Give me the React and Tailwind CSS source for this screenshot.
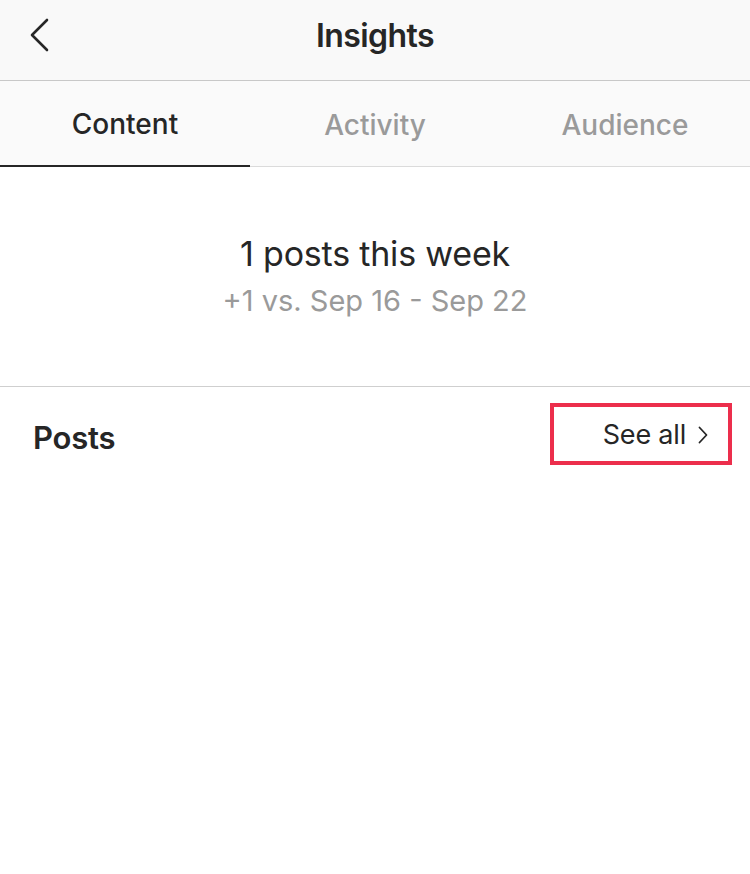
import React from 'react';

const font = { fontFamily: 'Inter, "Noto Sans", sans-serif' };

export default function App() {
  const tabs = ['Content', 'Activity', 'Audience'];
  return (
    <div className="w-[750px] h-[874px] bg-white text-[#262626]" style={font}>
      {/* Header */}
      <div className="relative h-[81px] bg-[#f9f9f9] border-b border-[#c8c8c8] flex items-center justify-center">
        <svg className="absolute left-[28px] top-[18px]" width="22" height="34" viewBox="0 0 22 34" fill="none">
          <path d="M19 2 L4 17 L19 32" stroke="#262626" strokeWidth="2.6" strokeLinecap="round" strokeLinejoin="round" />
        </svg>
        <h1 className="text-[32px] font-semibold tracking-[-0.6px] -mt-[8px]">Insights</h1>
      </div>

      {/* Tabs */}
      <div className="flex h-[86px] bg-[#fafafa] border-b border-[#dbdbdb]">
        {tabs.map((t, i) => (
          <div
            key={t}
            className={`flex-1 flex items-center justify-center text-[28px] font-medium pt-[2px] ${
              i === 0 ? 'text-[#262626] border-b-2 border-[#262626] -mb-px' : 'text-[#9a9a9a]'
            }`}
          >
            {t}
          </div>
        ))}
      </div>

      {/* Summary */}
      <div className="h-[220px] flex flex-col items-center justify-center border-b border-[#cfcfcf]">
        <p className="text-[34px] leading-[42px] tracking-[-0.2px] -mt-[2px]">1 posts this week</p>
        <p className="text-[29px] leading-[36px] text-[#9a9a9a] mt-[8px]">+1 vs. Sep 16 - Sep 22</p>
      </div>

      {/* Posts row */}
      <div className="flex items-center justify-between pl-[33px] pr-[18px] pt-[16px]">
        <h2 className="text-[31px] font-semibold tracking-[-0.2px] mt-[8px]">Posts</h2>
        <div className="w-[182px] h-[62px] border-[4px] border-[#ec2e4c] flex items-center justify-end pr-[20px] gap-[12px]">
          <span className="text-[27px] tracking-[-0.2px] mt-[2px]">See all</span>
          <svg width="10" height="18" viewBox="0 0 10 18" fill="none" className="mt-[2px]">
            <path d="M1.5 1.5 L8.5 9 L1.5 16.5" stroke="#262626" strokeWidth="1.8" strokeLinecap="round" strokeLinejoin="round" />
          </svg>
        </div>
      </div>
    </div>
  );
}
